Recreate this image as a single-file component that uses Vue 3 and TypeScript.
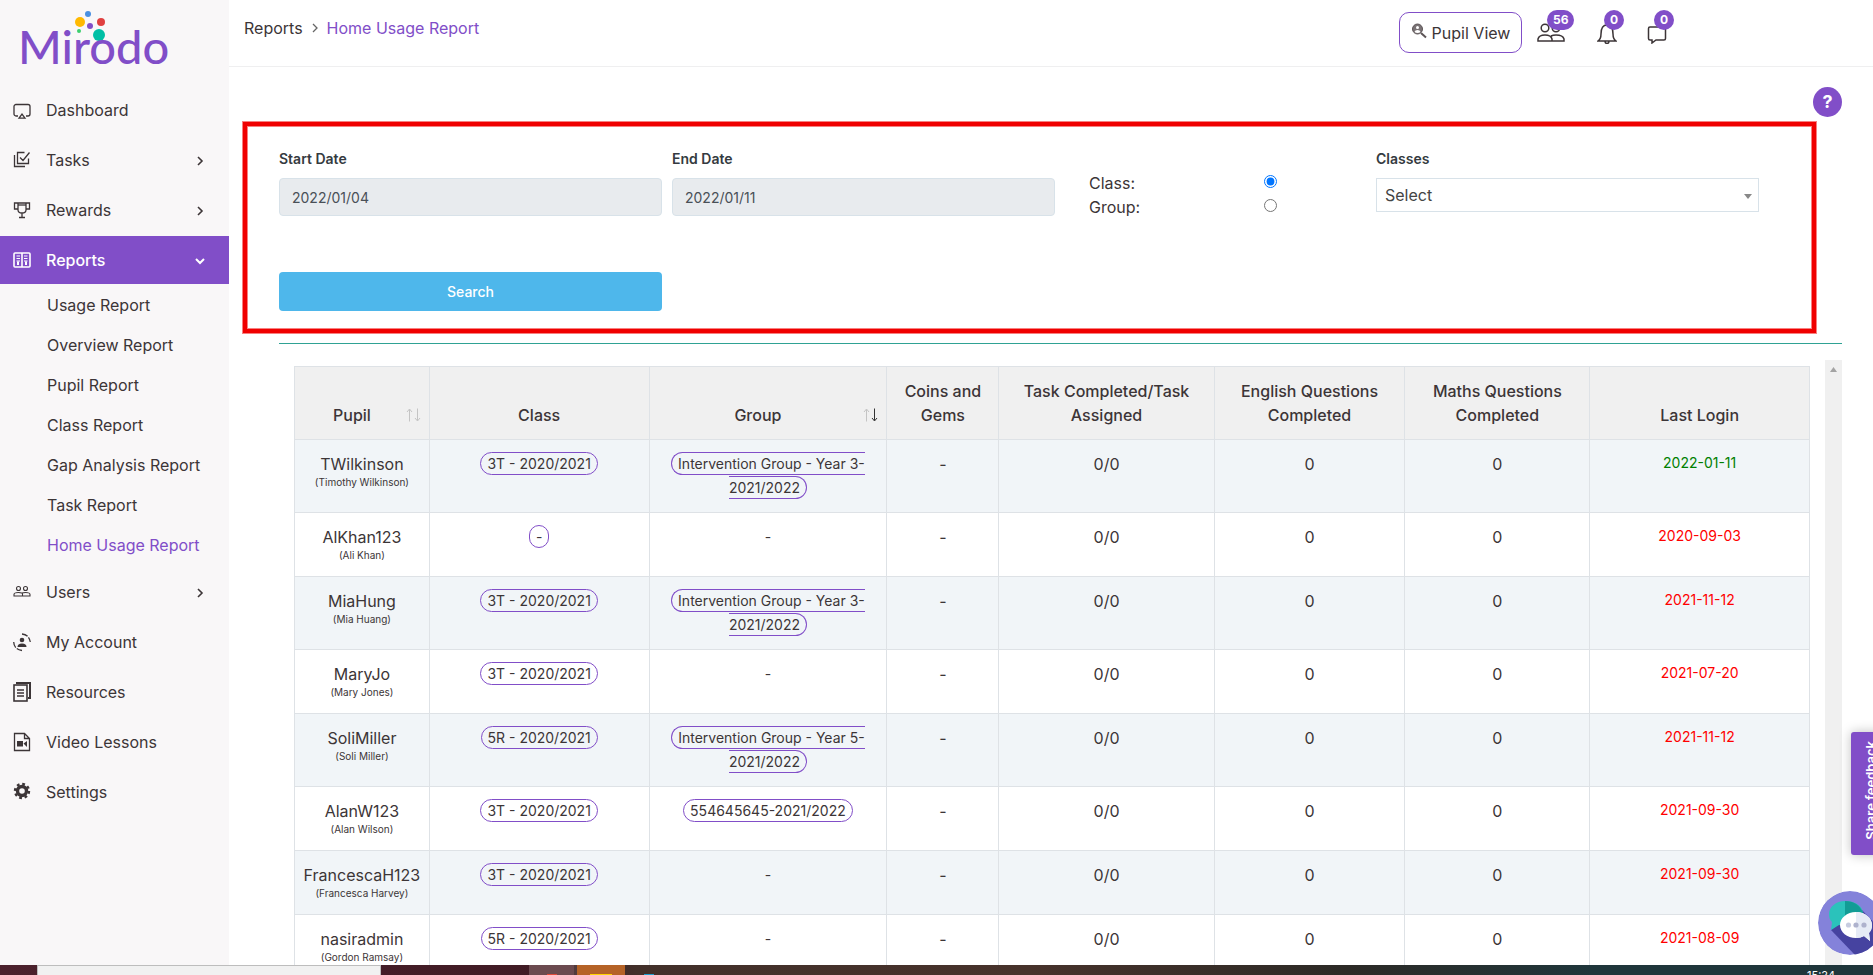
<script setup lang="ts">
import { ref } from 'vue'

interface NavItem {
  label: string
  icon: string
  expandable?: boolean
  children?: string[]
}

interface PupilRow {
  user: string
  name: string
  cls: string
  group: string
  login: string
  recent?: boolean
}

const nav: NavItem[] = [
  { label: 'Dashboard', icon: 'dashboard' },
  { label: 'Tasks', icon: 'tasks', expandable: true },
  { label: 'Rewards', icon: 'rewards', expandable: true },
  {
    label: 'Reports',
    icon: 'reports',
    children: [
      'Usage Report',
      'Overview Report',
      'Pupil Report',
      'Class Report',
      'Gap Analysis Report',
      'Task Report',
      'Home Usage Report',
    ],
  },
  { label: 'Users', icon: 'users', expandable: true },
  { label: 'My Account', icon: 'account' },
  { label: 'Resources', icon: 'resources' },
  { label: 'Video Lessons', icon: 'video' },
  { label: 'Settings', icon: 'settings' },
]
const current = 'Home Usage Report'

const rows: PupilRow[] = [
  { user: 'TWilkinson', name: 'Timothy Wilkinson', cls: '3T - 2020/2021', group: 'Intervention Group - Year 3-2021/2022', login: '2022-01-11', recent: true },
  { user: 'AlKhan123', name: 'Ali Khan', cls: '-', group: '', login: '2020-09-03' },
  { user: 'MiaHung', name: 'Mia Huang', cls: '3T - 2020/2021', group: 'Intervention Group - Year 3-2021/2022', login: '2021-11-12' },
  { user: 'MaryJo', name: 'Mary Jones', cls: '3T - 2020/2021', group: '', login: '2021-07-20' },
  { user: 'SoliMiller', name: 'Soli Miller', cls: '5R - 2020/2021', group: 'Intervention Group - Year 5-2021/2022', login: '2021-11-12' },
  { user: 'AlanW123', name: 'Alan Wilson', cls: '3T - 2020/2021', group: '554645645-2021/2022', login: '2021-09-30' },
  { user: 'FrancescaH123', name: 'Francesca Harvey', cls: '3T - 2020/2021', group: '', login: '2021-09-30' },
  { user: 'nasiradmin', name: 'Gordon Ramsay', cls: '5R - 2020/2021', group: '', login: '2021-08-09' },
]

const mode = ref('class')
const startDate = ref('2022/01/04')
const endDate = ref('2022/01/11')
</script>

<template>
  <div class="screen">
    <div class="app">
      <aside class="sidebar">
        <a class="logo" href="#">
          <svg width="180" height="74" viewBox="0 0 180 74" role="img" aria-label="Mirodo">
            <circle cx="80" cy="29" r="6" fill="#00bfa5" />
            <text class="logo-text" x="-1" y="58">Mirodo</text>
            <circle cx="69" cy="8" r="3" fill="#4a90e2" />
            <circle cx="61" cy="16" r="5" fill="#ffb900" />
            <circle cx="82" cy="16" r="4" fill="#e04040" />
            <circle cx="71" cy="20" r="3" fill="#814ec8" />
            <circle cx="60" cy="25" r="2" fill="#3ccf6e" />
          </svg>
        </a>
        <nav aria-label="Main">
          <ul class="nav">
            <li v-for="item in nav" :key="item.label">
              <a href="#" class="nav-link" :class="{ active: item.children }">
                <svg class="nav-icon" width="18" height="20" viewBox="0 0 18 20" fill="none" stroke="currentColor" stroke-width="1.3" aria-hidden="true">
                  <g v-if="item.icon === 'dashboard'">
                    <path d="M5 16H3a2 2 0 0 1-2-2V6.500a2 2 0 0 1 2-2h12a2 2 0 0 1 2 2V14a2 2 0 0 1-2 2h-2" />
                    <path d="M6 18.200 9 14l3 4.200z" />
                  </g>
                  <g v-else-if="item.icon === 'tasks'">
                    <path d="M15.500 8.500v5H4.500V2.500h7M1.500 5v11.500H12M7 7.500l3 3 6.500-8" />
                  </g>
                  <g v-else-if="item.icon === 'rewards'">
                    <path d="M5 3h8v7q0 3-4 3t-4-3zM4.500 3H1.500v6H5M13.500 3h3v6H13M9 13v4M6 17.500h6" />
                    <path d="M5 5h8" />
                  </g>
                  <g v-else-if="item.icon === 'reports'">
                    <rect x="1" y="3" width="16" height="14" rx="1" stroke-width="1.600" />
                    <path d="M9 3v14" stroke-width="1.600" />
                    <path d="M3.500 6H7M3.500 8.500H7M11 6h3.500M11 8.500h3.500M3.500 11H7M11 11h3.500" stroke-width="1.100" />
                    <path d="M5 11.500v3.500M13 11.500v3.500" stroke-width="2" />
                  </g>
                  <g v-else-if="item.icon === 'users'" stroke-width="1.100">
                    <circle cx="5.500" cy="6.500" r="2" /><circle cx="12.500" cy="6.500" r="2" />
                    <path d="M1 14v-1.500q0-2 4.500-2t4 2V14zM9 11q1-.5 3.500-.5 4.500 0 4.500 2V14H9" />
                  </g>
                  <g v-else-if="item.icon === 'account'">
                    <circle cx="9" cy="8" r="2.300" fill="currentColor" stroke="none" />
                    <path d="M4.500 15q0-3.500 4.500-3.500t4.500 3.500z" fill="currentColor" stroke="none" />
                    <path d="M9 2q7 .5 8.300 8M.7 10Q1 17.500 9 18.500" stroke-dasharray="6 1.500" />
                  </g>
                  <g v-else-if="item.icon === 'resources'">
                    <path d="M4 2V1h13v15h-2" stroke-width="2" />
                    <rect x="1" y="3" width="13" height="16" stroke-width="1.600" />
                    <path d="M4 8h7M4 11h7M4 14h7" stroke-width="1.500" />
                  </g>
                  <g v-else-if="item.icon === 'video'">
                    <path d="M1.500 1.500h10l5 5v12h-15zM11.500 1.500v5h5" />
                    <path d="M4 9h6v5.500H4zM10.500 11.500 14 9v6z" fill="currentColor" stroke="none" />
                  </g>
                  <g v-else>
                    <circle cx="9" cy="9" r="4.500" stroke-width="3.400" />
                    <circle cx="9" cy="9" r="7" stroke-width="2.400" stroke-dasharray="2.750 2.750" />
                  </g>
                </svg>
                <span>{{ item.label }}</span>
                <svg v-if="item.expandable || item.children" class="chev" width="12" height="12" viewBox="0 0 12 12" fill="none" stroke="currentColor" stroke-width="1.600" aria-hidden="true">
                  <path v-if="item.children" d="M2 5l4 4 4-4" stroke-width="2" />
                  <path v-else d="M4 3l4 4-4 4" />
                </svg>
              </a>
              <ul v-if="item.children" class="subnav">
                <li v-for="c in item.children" :key="c">
                  <a href="#" :class="{ current: c === current }">{{ c }}</a>
                </li>
              </ul>
            </li>
          </ul>
        </nav>
      </aside>

      <main class="main">
        <header class="topbar">
          <nav class="crumbs" aria-label="Breadcrumb">
            <a href="#">Reports</a>
            <svg width="6" height="10" viewBox="0 0 6 10" fill="none" stroke="#666" stroke-width="1.300" aria-hidden="true"><path d="M1 1l4 4-4 4" /></svg>
            <a href="#" class="current">Home Usage Report</a>
          </nav>
          <div class="actions">
            <button class="pupil-view" type="button">
              <svg width="16" height="20" viewBox="0 0 16 20" aria-hidden="true">
                <circle cx="6.500" cy="6" r="5" fill="#7a7375" stroke="#5d5557" stroke-width="1" />
                <circle cx="6.500" cy="4.500" r="1.500" fill="#fff" />
                <path d="M3.500 9q.5-2 3-2t3 2q-3 2-6 0z" fill="#fff" />
                <path d="M10 10l5 4.500" stroke="#5d5557" stroke-width="2" />
              </svg>
              Pupil View
            </button>
            <button class="icon-btn people" type="button" aria-label="Pupils online">
              <svg width="28" height="20" viewBox="0 0 28 20" fill="none" stroke="#3c3537" stroke-width="1.500" aria-hidden="true">
                <circle cx="8" cy="5" r="3.800" /><circle cx="19" cy="5" r="3.800" />
                <path d="M1 18v-2q1-4 7-4t7 4v2zM14 13q2-1 5-1 7 0 8 4v2H15" />
              </svg>
              <span class="badge">56</span>
            </button>
            <button class="icon-btn" type="button" aria-label="Notifications">
              <svg width="20" height="22" viewBox="0 0 20 22" fill="none" stroke="#3c3537" stroke-width="1.500" aria-hidden="true">
                <path d="M1 19q3-2 3-7 0-9 6-9t6 9q0 5 3 7zM8 19q0 2.500 2 2.500t2-2.500M10 3V1" />
              </svg>
              <span class="badge">0</span>
            </button>
            <button class="icon-btn" type="button" aria-label="Messages">
              <svg width="20" height="22" viewBox="0 0 20 22" fill="none" stroke="#3c3537" stroke-width="1.500" aria-hidden="true">
                <path d="M3 5h14q1.500 0 1.500 1.500v10q0 1.500-1.500 1.500H9l-4 3v-3H3q-1.500 0-1.500-1.500v-10Q1.500 5 3 5z" />
              </svg>
              <span class="badge">0</span>
            </button>
          </div>
        </header>

        <div class="help-row">
          <button class="help" type="button" aria-label="Help">?</button>
        </div>

        <form class="filters" @submit.prevent>
          <div class="field">
            <label for="start">Start Date</label>
            <input id="start" v-model="startDate" type="text" readonly />
          </div>
          <div class="field">
            <label for="end">End Date</label>
            <input id="end" v-model="endDate" type="text" readonly />
          </div>
          <div class="radios">
            <label for="by-class">Class:</label>
            <input id="by-class" v-model="mode" type="radio" name="mode" value="class" />
            <label for="by-group">Group:</label>
            <input id="by-group" v-model="mode" type="radio" name="mode" value="group" />
          </div>
          <div class="field">
            <label for="classes">Classes</label>
            <div class="select-wrap">
              <select id="classes"><option>Select</option></select>
              <svg width="8" height="5" viewBox="0 0 8 5" aria-hidden="true"><path d="M0 0h8L4 5z" fill="#888" /></svg>
            </div>
          </div>
          <button class="search" type="submit">Search</button>
        </form>

        <hr class="rule" />

        <section class="results">
          <div class="table-pane">
            <table>
              <colgroup>
                <col class="c-pupil" /><col class="c-class" /><col class="c-group" /><col class="c-coins" />
                <col class="c-task" /><col class="c-english" /><col class="c-maths" /><col class="c-login" />
              </colgroup>
              <thead>
                <tr>
                  <th scope="col" class="sortable">
                    Pupil
                    <svg class="sort" width="16" height="14" viewBox="0 0 16 14" fill="none" stroke="#c4c4c4" aria-hidden="true">
                      <path d="M3.500 13.500v-12M1 4l2.500-3L6 4M11.500 .5v12M9 10l2.500 3 2.500-3" />
                    </svg>
                  </th>
                  <th scope="col">Class</th>
                  <th scope="col" class="sortable" aria-sort="descending">
                    Group
                    <svg class="sort" width="16" height="14" viewBox="0 0 16 14" fill="none" stroke="#c4c4c4" aria-hidden="true">
                      <path d="M3.500 13.500v-12M1 4l2.500-3L6 4" />
                      <path d="M11.500 .5v12M9 10l2.500 3 2.500-3" stroke="#333" />
                    </svg>
                  </th>
                  <th scope="col">Coins and Gems</th>
                  <th scope="col">Task Completed/Task Assigned</th>
                  <th scope="col">English Questions Completed</th>
                  <th scope="col">Maths Questions Completed</th>
                  <th scope="col">Last Login</th>
                </tr>
              </thead>
              <tbody>
                <tr v-for="r in rows" :key="r.user">
                  <td class="pupil">{{ r.user }}<small>({{ r.name }})</small></td>
                  <td class="tags"><span class="pill">{{ r.cls }}</span></td>
                  <td class="tags"><span v-if="r.group" class="pill">{{ r.group }}</span><template v-else>-</template></td>
                  <td>-</td>
                  <td>0/0</td>
                  <td>0</td>
                  <td>0</td>
                  <td><span class="login" :class="{ recent: r.recent }">{{ r.login }}</span></td>
                </tr>
              </tbody>
            </table>
          </div>
          <div class="track" aria-hidden="true">
            <svg width="7" height="5" viewBox="0 0 7 5"><path d="M0 5h7L3.500 0z" fill="#a3a3a3" /></svg>
          </div>
        </section>
      </main>

      <button class="feedback" type="button"><span>Share feedback</span></button>
      <button class="chat" type="button" aria-label="Open chat">
        <svg width="64" height="64" viewBox="0 0 64 64" aria-hidden="true">
          <defs><clipPath id="disc"><circle cx="32" cy="32" r="32" /></clipPath></defs>
          <g clip-path="url(#disc)">
            <circle cx="32" cy="32" r="32" fill="#8482da" />
            <path d="M13 39l24 25h27V40L42 17z" fill="#4643a0" />
            <path d="M27 10c-9 0-16 6-16 13 0 4 1 6 3 8l-1 8 8-5c14 3 24-3 24-11S37 10 27 10z" fill="#2bc2bb" />
            <path d="M27 10c9 0 15 4 18 12L27 35z" fill="#129c95" />
            <path d="M38 21c-9 0-16 6-16 13s7 13 16 13c3 0 6-1 8-2l6 5-1-8c2-2 3-5 3-8 0-7-7-13-16-13z" fill="#fff" />
            <path d="M38 21c9 0 16 6 16 13 0 3-1 6-3 8l1 8-6-5c-2 1-5 2-8 2z" fill="#e6ebf6" />
            <circle cx="30.500" cy="34" r="2.600" fill="#c7cce0" />
            <circle cx="38" cy="34" r="2.600" fill="#aeb2cd" />
            <circle cx="46" cy="34" r="2.600" fill="#aeb2cd" />
          </g>
        </svg>
      </button>
    </div>

    <footer class="taskbar">
      <span class="start"></span>
      <span class="find"></span>
      <span class="gap"></span>
      <span class="task red"></span>
      <span class="task orange"></span>
      <span class="desk"><span class="dot"></span></span>
      <time class="clock">15:24</time>
    </footer>
  </div>
</template>

<style>
body {
  margin: 0;
  overflow: hidden;
}
</style>

<style scoped>
* {
  box-sizing: border-box;
}
.screen {
  height: 100vh;
  display: flex;
  flex-direction: column;
  font: 400 16px/24px Inter, "Liberation Sans", sans-serif;
  color: #3c3537;
  background: #fff;
}
button,
input,
select {
  font: inherit;
  color: inherit;
}
button {
  cursor: pointer;
}
a {
  color: inherit;
  text-decoration: none;
}
ul {
  list-style: none;
  margin: 0;
  padding: 0;
}
.app {
  position: relative;
  flex: 1;
  min-height: 0;
  display: flex;
  overflow: hidden;
}

.sidebar {
  width: 229px;
  flex: none;
  background: #f9f7f8;
}
.logo {
  display: block;
  height: 80px;
  padding: 6px 0 0 19px;
}
.logo svg {
  display: block;
}
.logo-text {
  font: 500 47px Lato, sans-serif;
  fill: #814ec8;
}
.nav {
  display: flex;
  flex-direction: column;
  gap: 2px;
  padding-top: 6px;
}
.nav-link {
  display: flex;
  align-items: center;
  height: 48px;
  padding: 0 23px 0 13px;
}
.nav-icon {
  margin-right: 15px;
}
.chev {
  margin-left: auto;
}
.nav-link.active {
  background: #814ec8;
  color: #fff;
  font-weight: 500;
}
.subnav {
  padding: 1px 0 1px;
}
.subnav a {
  display: flex;
  align-items: center;
  height: 40px;
  padding: 0 0 0 47px;
}
.current {
  color: #814ec8;
}

.main {
  flex: 1;
  min-width: 0;
  display: flex;
  flex-direction: column;
}
.topbar {
  flex: none;
  height: 67px;
  display: flex;
  justify-content: space-between;
  border-bottom: 1px solid #efeff0;
  padding: 12px 176px 0 15px;
}
.crumbs {
  display: flex;
  align-items: center;
  gap: 9px;
  height: 32px;
}
.actions {
  display: flex;
  align-items: flex-start;
}
.pupil-view {
  height: 41px;
  width: 123px;
  padding: 0;
  display: flex;
  align-items: center;
  justify-content: center;
  gap: 5px;
  border: 1px solid #814ec8;
  border-radius: 10px;
  background: #fff;
  margin-right: 15px;
}
.icon-btn {
  position: relative;
  width: 50px;
  height: 34px;
  padding: 8px 0 0;
  border: 0;
  background: none;
  text-align: left;
}
.icon-btn.people {
  width: 60px;
}
.icon-btn svg {
  display: block;
}
.badge {
  position: absolute;
  top: -2px;
  left: 7px;
  min-width: 20px;
  height: 20px;
  padding: 0 6px;
  border-radius: 10px;
  background: #814ec8;
  color: #fff;
  font-size: 12px;
  font-weight: 700;
  line-height: 20px;
  text-align: center;
}
.people .badge {
  left: 10px;
}

.help-row {
  flex: none;
  display: flex;
  justify-content: flex-end;
  padding: 20px 31px 5px 0;
}
.help {
  width: 29px;
  height: 30px;
  padding: 0;
  border: 0;
  border-radius: 50%;
  background: #814ec8;
  color: #fff;
  font-size: 18px;
  font-weight: 700;
}

.filters {
  flex: none;
  margin: 0 57px 0 14px;
  padding: 23px 53px 18px 32px;
  border: 4px solid #f00000;
  box-shadow: 0 0 0 1px #f78080, inset 0 0 0 1px #f78080;
  display: grid;
  grid-template-columns: 383fr 383fr 301fr 383fr;
  column-gap: 10px;
  row-gap: 53px;
}
.field label {
  display: block;
  font-size: 14px;
  font-weight: 600;
  line-height: 20px;
  margin-bottom: 9px;
  color: #343a40;
}
.field input {
  display: block;
  width: 100%;
  height: 38px;
  padding: 0 12px;
  border: 1px solid #d8e2e9;
  border-radius: 4px;
  background: #e8ebee;
  font-size: 14px;
  color: #495057;
}
.select-wrap {
  position: relative;
}
.select-wrap select {
  display: block;
  width: 100%;
  height: 34px;
  padding: 0 8px;
  border: 1px solid #d8e2e9;
  border-radius: 0;
  background: #fff;
  appearance: none;
  color: #444;
}
.select-wrap svg {
  position: absolute;
  right: 7px;
  top: 16px;
  pointer-events: none;
}
.radios {
  padding: 22px 0 0 24px;
  display: grid;
  grid-template-columns: 63% auto;
  grid-auto-rows: 24px;
}
.radios input {
  width: 13px;
  height: 13px;
  margin: 4px 0 0;
  accent-color: #0075ff;
}
.search {
  grid-column: 1;
  height: 39px;
  border: 0;
  border-radius: 4px;
  background: #4eb7eb;
  color: #fff;
  font-size: 14px;
  font-weight: 500;
}

.rule {
  flex: none;
  margin: 10px 31px 16px 50px;
  border: 0;
  height: 1px;
  background: #2fa294;
}
.results {
  flex: 1;
  min-height: 0;
  margin: 0 31px 0 50px;
  display: flex;
}
.table-pane {
  flex: 1;
  overflow: hidden;
  padding: 6px 15px 0;
}
.track {
  width: 17px;
  background: #f0f0f0;
  display: flex;
  justify-content: center;
  padding-top: 7px;
}
table {
  width: 100%;
  table-layout: fixed;
  border-collapse: collapse;
}
.c-pupil { width: 8.9%; }
.c-class { width: 14.5%; }
.c-group { width: 15.7%; }
.c-coins { width: 7.4%; }
.c-task { width: 14.2%; }
.c-english { width: 12.6%; }
.c-maths { width: 12.2%; }
.c-login { width: 14.5%; }
th,
td {
  border: 1px solid #dee2e6;
  padding: 12px 8px;
  text-align: center;
}
td {
  vertical-align: top;
}
th {
  background: #f0f0f0;
  vertical-align: bottom;
  font-weight: 500;
}
th.sortable {
  position: relative;
  padding-right: 28px;
}
.sort {
  position: absolute;
  right: 7px;
  bottom: 17px;
}
tbody tr:nth-child(odd) {
  background: #f1f5f8;
}
.pupil {
  padding: 12px 4px 8px;
}
small {
  display: block;
  font-size: 10px;
  line-height: 13px;
  height: 19px;
}
.tags {
  padding: 12px 16px;
  font-size: 14px;
}
.pill {
  border: 1px solid #814ec8;
  border-radius: 12px;
  padding: 2px 6px;
}
.login {
  display: block;
  line-height: 22px;
  font-size: 14px;
  color: #f00;
}
.login.recent {
  color: #008000;
}

.feedback {
  position: absolute;
  right: -17px;
  top: 732px;
  width: 39px;
  height: 123px;
  padding: 0;
  border: 0;
  border-radius: 3px;
  background: #814ec8;
  color: #fff;
  font-size: 13px;
  font-weight: 600;
  box-shadow: 0 0 12px rgba(0, 0, 0, 0.25);
}
.feedback span {
  display: inline-block;
  writing-mode: vertical-rl;
  transform: rotate(180deg);
}
.chat {
  position: absolute;
  right: -9px;
  bottom: 10px;
  width: 64px;
  height: 64px;
  padding: 0;
  border: 0;
  background: none;
}
.chat svg {
  display: block;
}

.taskbar {
  flex: none;
  height: 10px;
  overflow: hidden;
  display: flex;
  background: linear-gradient(90deg, #4c212d 0, #401b24 30%, #42302a 34%, #47322b 55%, #2c2a26 72%, #1f363b 85%, #1f363b 100%);
}
.start {
  width: 37px;
}
.find {
  width: 344px;
  background: #f1f1f1;
  border: 1px solid #bdbdbd;
  border-bottom: 0;
}
.gap {
  width: 148px;
}
.task {
  width: 48px;
  display: flex;
  justify-content: center;
  align-items: flex-end;
}
.task::after {
  content: "";
  height: 1px;
}
.task.red {
  background: #6b4a4f;
  border-right: 3px solid #503a3d;
}
.task.red::after {
  width: 10px;
  background: #e04a3a;
}
.task.orange {
  background: #b56327;
}
.task.orange::after {
  width: 22px;
  background: #ffd400;
}
.desk {
  flex: 1;
  display: flex;
  align-items: flex-end;
  padding-left: 19px;
}
.dot {
  width: 10px;
  height: 1px;
  background: #1c9fd0;
}
.clock {
  padding: 4px 38px 0 0;
  color: #fff;
  font-size: 11px;
  line-height: 12px;
}
</style>
